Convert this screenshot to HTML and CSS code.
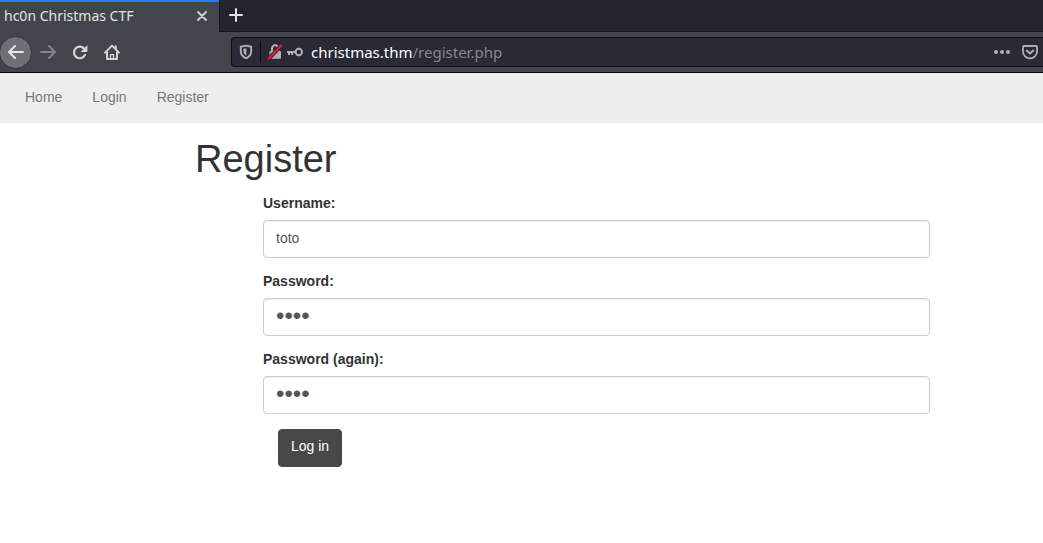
FILE: index.html
```html
<!DOCTYPE html>
<html lang="en">
<head>
<meta charset="utf-8">
<title>hc0n Christmas CTF</title>
<link rel="stylesheet" href="styles.css">
</head>
<body>
<header class="browser">
  <div class="tabs">
    <div class="tab">
      <span class="tab-title">hc0n Christmas CTF</span>
      <button class="icon-button" type="button" aria-label="Close tab">
        <svg width="10" height="10" viewBox="0 0 10 10"><path d="M1 1l8 8M9 1l-8 8" stroke="#d4d4d3" stroke-width="1.8" stroke-linecap="round"/></svg>
      </button>
    </div>
    <button class="icon-button new-tab" type="button" aria-label="New tab">
      <svg width="14" height="14" viewBox="0 0 14 14"><path d="M7 1v12M1 7h12" stroke="#e0e0df" stroke-width="2" stroke-linecap="round"/></svg>
    </button>
  </div>
  <div class="toolbar">
    <div class="controls">
      <button class="icon-button back" type="button" aria-label="Back">
        <svg width="16" height="16" viewBox="0 0 16 16" fill="none" stroke="#e6e6e5" stroke-width="2" stroke-linecap="round" stroke-linejoin="round"><path d="M15 8H1M7 2L1 8l6 6"/></svg>
      </button>
      <button class="icon-button" type="button" aria-label="Forward">
        <svg width="16" height="16" viewBox="0 0 16 16" fill="none" stroke="#84868a" stroke-width="2" stroke-linecap="round" stroke-linejoin="round"><path d="M1 8h14M9 2l6 6-6 6"/></svg>
      </button>
      <button class="icon-button" type="button" aria-label="Reload">
        <svg width="16" height="16" viewBox="0 0 16 16"><path d="M12.6 5.2A5.8 5.8 0 1 0 13 11" fill="none" stroke="#d4d4d3" stroke-width="2.2" stroke-linecap="round"/><path d="M15.4 1v6.3a.6.6 0 0 1-.6.6H8.5z" fill="#d4d4d3"/></svg>
      </button>
      <button class="icon-button" type="button" aria-label="Home page">
        <svg width="16" height="16" viewBox="0 0 16 16" fill="none" stroke="#d4d4d3" stroke-width="2" stroke-linecap="round" stroke-linejoin="round"><path d="M1 8.6L8 1.6l7 7M3 8v7h10V8M11.7 2.2v3"/><path d="M6.5 15v-4.4h3V15" stroke-width="1.4"/></svg>
      </button>
    </div>
    <div class="address">
      <svg width="14" height="16" viewBox="0 0 14 16" role="img" aria-label="Tracking protection"><path d="M7 1.6l5.2 1.1v4.4c0 3.4-1.9 5.8-5.2 7.3-3.3-1.5-5.2-3.9-5.2-7.3V2.7z" fill="none" stroke="#b0b0b2" stroke-width="1.9" stroke-linejoin="round"/><path d="M7.4 4.3v7.4C5.2 10.5 4.4 9 4.4 7V4.8z" fill="#b0b0b2"/></svg>
      <span class="divider"></span>
      <svg width="16" height="16" viewBox="0 0 16 16" role="img" aria-label="Connection not secure"><path d="M5 8V4.4a3.2 3.2 0 0 1 6.4 0V8" fill="none" stroke="#b0b0b2" stroke-width="2.1"/><rect x="2.4" y="7" width="11.6" height="7.8" rx="1" fill="#b0b0b2"/><path d="M1.4 15L14.6 1.2" stroke="#292a35" stroke-width="4"/><path d="M1.8 14.6L14.2 1.6" stroke="#f0143e" stroke-width="2.2" stroke-linecap="round"/></svg>
      <svg width="16" height="16" viewBox="0 0 16 16" role="img" aria-label="Saved login"><circle cx="11.8" cy="8" r="3.2" fill="none" stroke="#b0b0b2" stroke-width="2"/><path d="M9 8H0M2 8v3M5.2 8v3" fill="none" stroke="#b0b0b2" stroke-width="2"/></svg>
      <span class="url">christmas.thm<span class="path">/register.php</span></span>
      <button class="icon-button" type="button" aria-label="Page actions">
        <svg width="16" height="16" viewBox="0 0 16 16" fill="#b0b0b2"><circle cx="2" cy="8" r="2"/><circle cx="8" cy="8" r="2"/><circle cx="14" cy="8" r="2"/></svg>
      </button>
      <button class="icon-button pocket" type="button" aria-label="Save to Pocket">
        <svg width="16" height="16" viewBox="0 0 16 16" fill="none" stroke="#b0b0b2" stroke-width="1.8" stroke-linecap="round" stroke-linejoin="round"><path d="M2 2h12a1 1 0 0 1 1 1v4.5a7 6.8 0 0 1-14 0V3a1 1 0 0 1 1-1z"/><path d="M4.8 6.6L8 9.6l3.2-3" stroke-width="2"/></svg>
      </button>
    </div>
  </div>
</header>
<nav class="site-nav">
  <a href="#">Home</a>
  <a href="#">Login</a>
  <a href="#">Register</a>
</nav>
<main class="content">
  <h1>Register</h1>
  <form class="form">
    <div class="field">
      <label for="username">Username:</label>
      <input id="username" type="text" value="toto">
    </div>
    <div class="field">
      <label for="password">Password:</label>
      <input id="password" type="password" value="toto">
    </div>
    <div class="field">
      <label for="again">Password (again):</label>
      <input id="again" type="password" value="toto">
    </div>
    <button class="submit" type="submit">Log in</button>
  </form>
</main>
</body>
</html>
```
FILE: styles.css
```css
* {
  box-sizing: border-box;
}

body {
  margin: 0;
  background: #fff;
  color: #333;
  font: 14px/20px "Liberation Sans", Arial, sans-serif;
}

svg {
  display: block;
  flex: none;
}

.browser {
  background: #42454c;
  border-bottom: 1px solid #0c0c0d;
  font-family: "Noto Sans", sans-serif;
}

.tabs {
  display: flex;
  height: 32px;
  background: #23252e;
  border-bottom: 1px solid #15161c;
}

.tab {
  display: flex;
  align-items: center;
  justify-content: space-between;
  width: 219px;
  height: 32px;
  padding: 0 12px 2px 4px;
  background: #42454c;
  border-top: 2px solid #2a78f5;
  color: #e4e4e3;
}

.icon-button {
  display: flex;
  align-items: center;
  justify-content: center;
  padding: 0;
  border: 0;
  background: none;
}

.new-tab {
  padding: 0 9px 2px;
  border-left: 1px solid #15161c;
}

.toolbar {
  display: flex;
  align-items: center;
  height: 40px;
}

.controls {
  display: flex;
  align-items: center;
  flex: none;
  gap: 16px;
  width: 231px;
}

.back {
  width: 33px;
  height: 33px;
  margin: 0 -8px 0 -1px;
  border: 1px solid #303238;
  border-radius: 50%;
  background: #6f7075;
}

.address {
  display: flex;
  flex: 1;
  align-items: center;
  height: 30px;
  padding-left: 7px;
  border: 1px solid #0e0f13;
  border-right: 0;
  border-radius: 4px 0 0 4px;
  background: #292a35;
}

.divider {
  align-self: stretch;
  width: 1px;
  margin: 3px 6px 3px 7px;
  background: #0e0f13;
}

.address svg + svg {
  margin-left: 4px;
}

.url {
  flex: 1;
  margin-left: 8px;
  color: #fff;
  font-size: 15px;
}

.path {
  color: #87888d;
}

.pocket {
  margin: 0 5px 0 12px;
}

.site-nav {
  display: flex;
  gap: 30px;
  padding: 14px 25px 16px;
  background: #eee;
}

.site-nav a {
  color: #777;
  text-decoration: none;
}

.content {
  padding: 15px 113px 15px 195px;
}

h1 {
  margin: 0 0 13px;
  font-size: 38px;
  font-weight: 500;
  line-height: 42px;
}

.form {
  padding-left: 68px;
}

.field {
  margin-bottom: 13px;
}

.field:last-of-type {
  margin-bottom: 15px;
}

label {
  display: block;
  margin-bottom: 7px;
  line-height: 20px;
  font-weight: 700;
}

input {
  display: block;
  width: 100%;
  height: 38px;
  padding: 6px 12px 9px;
  border: 1px solid #ccc;
  border-radius: 4px;
  background: #fff;
  box-shadow: inset 0 1px 1px rgba(0, 0, 0, 0.075);
  color: #555;
  font: inherit;
}

input[type="password"] {
  padding-bottom: 8px;
  font-size: 24px;
}

.submit {
  height: 38px;
  margin-left: 15px;
  padding: 6px 12px 10px;
  border: 1px solid #474949;
  border-radius: 4px;
  background: #474949;
  color: #fff;
  font: inherit;
}
```
